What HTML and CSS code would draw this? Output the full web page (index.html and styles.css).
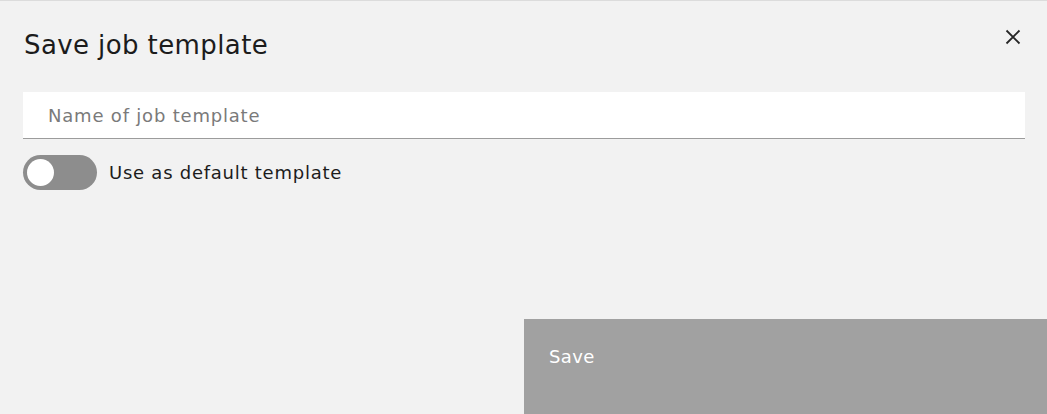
FILE: index.html
```html
<!DOCTYPE html>
<html lang="en">
<head>
    <meta charset="UTF-8">
    <meta name="viewport" content="width=device-width, initial-scale=1.0">
    <title>Save job template</title>
    <link rel="stylesheet" href="styles.css">
</head>
<body>
    <div class="modal">
        <div class="modal-header">
            <h2 class="modal-title">Save job template</h2>
            <button class="modal-close" type="button" aria-label="Close">
                <svg width="16" height="16" viewBox="0 0 16 16">
                    <path d="M1.5 1.5 L14.5 14.5 M14.5 1.5 L1.5 14.5" stroke="#262626" stroke-width="1.8" fill="none"/>
                </svg>
            </button>
        </div>
        <div class="modal-body">
            <input class="text-input" type="text" placeholder="Name of job template">
            <label class="toggle">
                <span class="toggle-track"><span class="toggle-knob"></span></span>
                <span class="toggle-label">Use as default template</span>
            </label>
        </div>
        <div class="modal-footer">
            <button class="btn-save" type="button">Save</button>
        </div>
    </div>
</body>
</html>
```

FILE: styles.css
```css
html, body {
    margin: 0;
    padding: 0;
}
body {
    background: #f2f2f2;
    font-family: "DejaVu Sans", "Noto Sans", sans-serif;
    color: #161616;
}
.modal {
    box-sizing: border-box;
    width: 1047px;
    height: 414px;
    border-top: 1px solid #dcdcdc;
    background: #f2f2f2;
    display: flex;
    flex-direction: column;
}
.modal-header {
    display: flex;
    justify-content: space-between;
    align-items: flex-start;
    padding: 28px 26px 0 24px;
}
.modal-title {
    margin: 0;
    font-size: 26px;
    line-height: 32px;
    letter-spacing: 0.4px;
    font-weight: 400;
    color: #1c1c1c;
}
.modal-close {
    border: 0;
    background: none;
    padding: 0;
    width: 16px;
    height: 16px;
    cursor: pointer;
}
.modal-close svg {
    display: block;
}
.modal-body {
    padding: 31px 22px 0 23px;
}
.text-input {
    box-sizing: border-box;
    display: block;
    width: 100%;
    height: 47px;
    border: 0;
    border-bottom: 1px solid #9c9c9c;
    background: #fff;
    padding: 0 25px;
    font-family: inherit;
    font-size: 18px;
    letter-spacing: 0.8px;
    color: #161616;
    outline: none;
}
.text-input::placeholder {
    color: #7a7a7a;
}
.toggle {
    display: flex;
    align-items: center;
    gap: 12px;
    margin-top: 16px;
}
.toggle-track {
    box-sizing: border-box;
    display: flex;
    align-items: center;
    width: 74px;
    height: 35px;
    padding-left: 4px;
    border-radius: 18px;
    background: #8d8d8d;
}
.toggle-knob {
    width: 27px;
    height: 27px;
    border-radius: 50%;
    background: #fff;
}
.toggle-label {
    font-size: 18px;
    letter-spacing: 0.75px;
    color: #1c1c1c;
}
.modal-footer {
    margin-top: auto;
    display: flex;
    justify-content: flex-end;
}
.btn-save {
    box-sizing: border-box;
    width: 523px;
    height: 95px;
    border: 0;
    background: #a1a1a1;
    color: #fff;
    display: flex;
    align-items: flex-start;
    padding: 26px 25px 0;
    font-family: "DejaVu Sans", sans-serif;
    font-size: 18px;
    letter-spacing: 0.4px;
    line-height: 24px;
}
```
